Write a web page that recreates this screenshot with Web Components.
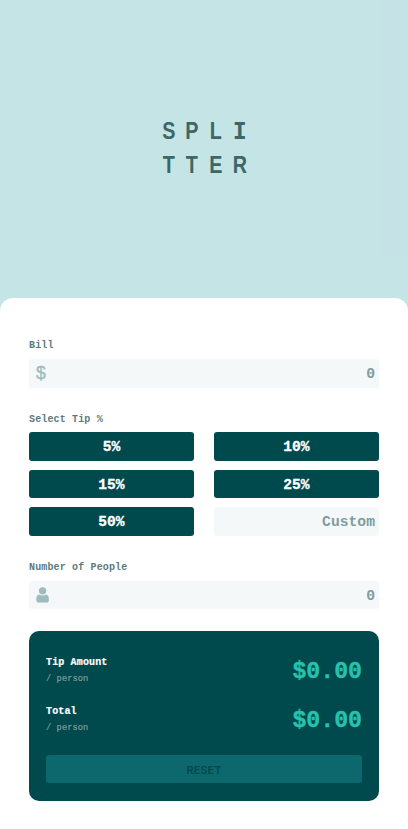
<!DOCTYPE html>
<html lang="en">
<head>
<meta charset="utf-8">
<title>Splitter</title>
<style>
html,body{margin:0;height:829px;overflow:hidden;background:#c5e4e5;font-family:"Liberation Mono",monospace;font-weight:700}
</style>
</head>
<body>
<split-app></split-app>
<script>
function define(name, html){
  const t=document.createElement('template');
  t.innerHTML=html;
  customElements.define(name, class extends HTMLElement{
    constructor(){super();this.attachShadow({mode:'open'}).append(t.content.cloneNode(true));}
  });
}

define('split-logo',`<style>
:host{display:grid;grid-template-columns:repeat(4,23.6px);grid-auto-rows:34.5px;justify-content:center;text-align:center;
font-family:"Liberation Sans",sans-serif;font-size:23.5px;line-height:34.5px;color:#3d6666}
span{transform:scaleX(.84)}
.i{font-family:"DejaVu Sans Mono",monospace;font-size:22.4px;transform:scaleX(1.04)}
</style><span>S</span><span>P</span><span>L</span><span class="i">I</span><span>T</span><span>T</span><span>E</span><span>R</span>`);

define('form-label',`<style>
:host{display:block;height:15px;line-height:15px;font-size:10px;letter-spacing:.15px;color:#5e7a7d}
</style><slot></slot>`);

define('number-field',`<style>
:host{display:flex;align-items:center;justify-content:space-between;box-sizing:border-box;height:28.6px;padding:0 4px 0 7px;
border-radius:3px;background:#f4f8f9;color:#7f9c9f;font-size:14.7px;line-height:28px}
.v{margin-left:auto;padding-top:2px}
</style><slot name="icon"></slot><span class="v"><slot></slot></span>`);

define('dollar-icon',`<style>
:host{display:block;width:10px;font-size:17.5px;line-height:28px;color:#9ebbbd;font-family:"Liberation Sans",sans-serif;font-weight:400;-webkit-text-stroke:.4px #9ebbbd}
</style>$`);

define('person-icon',`<style>:host{display:block;width:13px;height:16px}svg{display:block}</style>
<svg width="13" height="16" viewBox="0 0 13 16" fill="#9ebbbd"><ellipse cx="6.6" cy="3.8" rx="3.7" ry="3.6"/><path d="M2.6 7.5Q6.6 9.5 10.6 7.5Q12.9 8.3 12.9 12.8Q12.9 15.6 10.8 15.6H2.4Q.3 15.6 .3 12.8Q.3 8.3 2.6 7.5Z"/></svg>`);

define('tip-button',`<style>
:host{display:block;height:28.7px;border-radius:3px;background:#00494d;color:#fff;text-align:center;font-size:14.6px;line-height:31.5px;-webkit-text-stroke:.3px #fff}
</style><slot></slot>`);

define('amount-row',`<style>
:host{display:flex;justify-content:space-between;align-items:center;height:49px}
.t{color:#fff;font-size:10px;line-height:17px;letter-spacing:.15px;-webkit-text-stroke:.2px #fff}
.p{color:#7f9c9f;font-size:8.7px;line-height:17px;font-weight:400;letter-spacing:.08px;-webkit-text-stroke:.2px #7f9c9f}
.a{color:#26c2ae;font-size:23.2px;line-height:34px;padding-top:3px;-webkit-text-stroke:.4px #26c2ae}
</style><div><div class="t"><slot></slot></div><div class="p">/ person</div></div><div class="a"><slot name="amount"></slot></div>`);

define('reset-button',`<style>
:host{display:block;height:28.5px;border-radius:3px;background:#0d686d;color:#00494d;text-align:center;
font:600 11px/31px Inter,sans-serif}
</style><slot></slot>`);

define('result-card',`<style>
:host{display:block;box-sizing:border-box;height:170px;padding:15.6px 17px 0;border-radius:10px;background:#00494d}
reset-button{margin-top:10.4px}
</style><amount-row>Tip Amount<span slot="amount">$0.00</span></amount-row>
<amount-row>Total<span slot="amount">$0.00</span></amount-row>
<reset-button>RESET</reset-button>`);

define('split-app',`<style>
:host{display:flex;flex-direction:column;height:829px;
background:linear-gradient(#c5e2e6,#c5e2e6) right top/29px 255px no-repeat,#c5e4e5}
header{height:185px;padding-top:113.5px;box-sizing:border-box;margin-bottom:113.4px}
main{flex:1;box-sizing:border-box;padding:39.6px 29px 0;border-radius:13px 13px 0 0;background:#fff}
number-field{margin-top:6px}
.tips{display:grid;grid-template-columns:165px 165px;gap:8.8px 20px;margin-top:5.6px}
.tips number-field{margin:0}
form-label.next{margin-top:24px}
result-card{margin-top:21.4px}
</style>
<header><split-logo></split-logo></header>
<main>
<form-label>Bill</form-label>
<number-field><dollar-icon slot="icon"></dollar-icon>0</number-field>
<form-label class="next">Select Tip %</form-label>
<div class="tips"><tip-button>5%</tip-button><tip-button>10%</tip-button><tip-button>15%</tip-button><tip-button>25%</tip-button><tip-button>50%</tip-button><number-field>Custom</number-field></div>
<form-label class="next">Number of People</form-label>
<number-field><person-icon slot="icon"></person-icon>0</number-field>
<result-card></result-card>
</main>`);
</script>
</body>
</html>
